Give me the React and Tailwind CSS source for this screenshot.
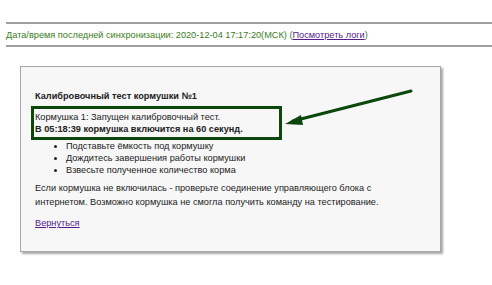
import React from 'react';

const steps = [
  'Подставьте ёмкость под кормушку',
  'Дождитесь завершения работы кормушки',
  'Взвесьте полученное количество корма',
];

const App = () => {
  return (
    <div className="min-h-screen bg-white text-[9.2px] leading-[12px] text-[#222] font-['Liberation_Sans',Arial,sans-serif]">
      {/* Sync status */}
      <div className="pt-[22px] pl-[6px]">
        <div className="border-t-2 border-b-2 border-[#a0a0a0] h-[25px] flex items-center text-[#3b7d23]">
          <span>
            Дата/время последней синхронизации: 2020-12-04 17:17:20(МСК) (
            <a href="#" className="text-[#551a8b] underline">Посмотреть логи</a>)
          </span>
        </div>
      </div>

      {/* Calibration card */}
      <div className="relative ml-[20px] mt-[19px] w-[421px] h-[186px] bg-[#f7f7f7] border border-[#a6a6a6] shadow-[2px_2px_2px_rgba(0,0,0,0.35)] pt-[23px] px-[14px]">
        <div className="font-bold">Калибровочный тест кормушки №1</div>

        <div className="mt-[4px] -ml-[4px] w-[251px] h-[34px] border-[3px] border-[#0b470b] pl-[1px] pt-[2px]">
          <div>Кормушка 1: Запущен калибровочный тест.</div>
          <div className="font-bold">В 05:18:39 кормушка включится на 60 секунд.</div>
        </div>

        <ul className="pl-[31px] list-disc">
          {steps.map((s) => (
            <li key={s}>{s}</li>
          ))}
        </ul>

        <p className="mt-[5px] w-[370px] leading-[14px]">
          Если кормушка не включилась - проверьте соединение управляющего блока с интернетом. Возможно кормушка не смогла получить команду на тестирование.
        </p>

        <a href="#" className="block mt-[8px] text-[#551a8b] underline">Вернуться</a>

        {/* Arrow pointing at the status */}
        <svg className="absolute left-[262px] top-[21px]" width="130" height="40" viewBox="0 0 130 40">
          <line x1="128" y1="3" x2="10" y2="33" stroke="#0b470b" strokeWidth="3" strokeLinecap="round" />
          <polygon points="2,36 18,27 20,37" fill="#0b470b" />
        </svg>
      </div>
    </div>
  );
};

export default App;
